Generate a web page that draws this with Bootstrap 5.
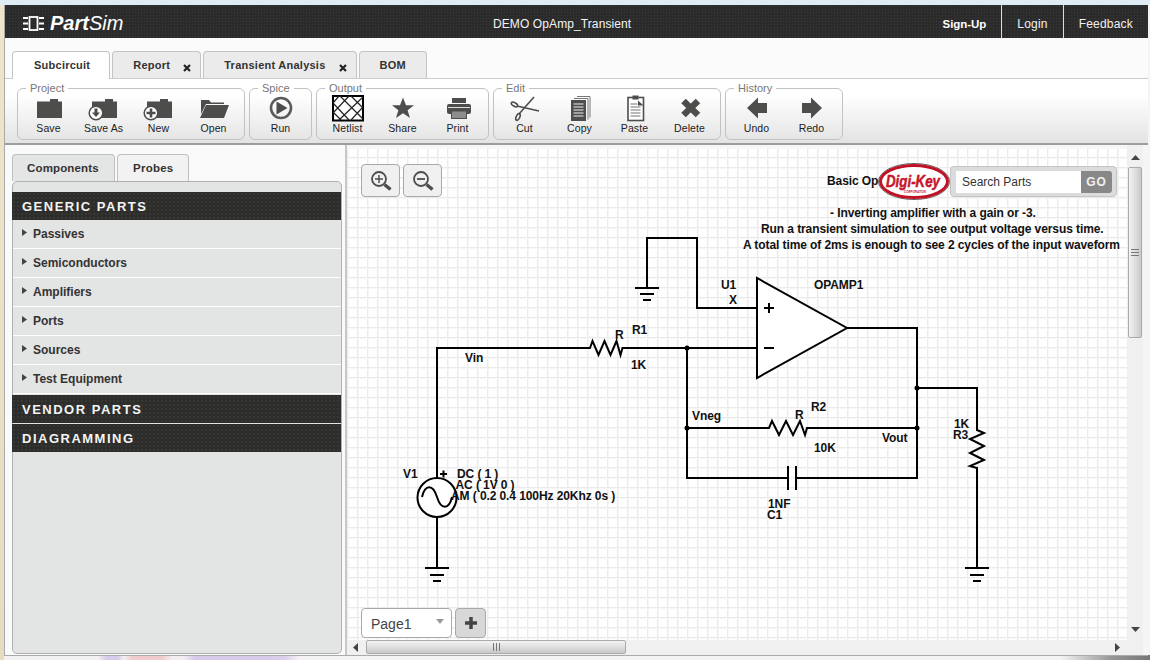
<!DOCTYPE html>
<html lang="en">
<head>
<meta charset="utf-8">
<title>PartSim</title>
<link href="https://cdn.jsdelivr.net/npm/bootstrap@5.3.0/dist/css/bootstrap.min.css" rel="stylesheet">
<style>
html,body{height:660px;overflow:hidden}
body{font-family:"Liberation Sans",Arial,sans-serif;font-size:12px;color:#333;
 background:
  linear-gradient(#dfecf3,#dfecf3) 0 0/100% 5px no-repeat,
  linear-gradient(#efe5cc,#e6dcc0) 0 0/4px 100% no-repeat,
  linear-gradient(90deg,#f2f2f2 98px,#d9cdec 106px,#d9cdec 118px,#f4f0f2 124px,#f0cccc 132px,#f0cccc 162px,#f2eef2 172px,#f2eef2 184px,#d8cbea 194px,#d8cbea 262px,#dccfec 285px,#f4f4f4 300px,#f4f4f4 1060px,#999 1110px,#777 1150px) 0 100%/100% 5px no-repeat,
  #f4f4f4}
.shell{position:relative;margin:5px 0 0 4px;width:1144px;height:651px;border-left:1px solid #aaa;border-bottom:1px solid #aaa;background:#fbfbfb}
.topbar{height:33px;color:#fff;background-color:#2b2b2b;background-image:radial-gradient(#3b3b3b 1px,transparent 1px);background-size:3px 3px}
.brand{width:488px;padding:3px 0 0 18px}
.brand-name{font-size:20px;font-style:italic;margin-left:6px;line-height:30px}
.doc-title{line-height:38px;font-size:12px;letter-spacing:.1px;color:#f4f4f4}
.top-link{display:block;color:#f0f0f0;text-decoration:none;padding:0 15px;line-height:38px;letter-spacing:.2px;border-left:1px solid #ddd}
.top-link.plain{border-left:0;font-weight:700;font-size:11.5px;color:#fff;letter-spacing:-.05px}
.tabstrip{height:41px;padding:13px 0 0 7px;border-bottom:1px solid #ccc;background:#fbfbfb}
.tabstrip .nav-link,.sidetabs .nav-link{display:flex;height:27px;font-weight:700;color:#333;font-size:11px;letter-spacing:.25px;line-height:27px;padding:0 20px;border:1px solid #c4c4c4;border-bottom:0;border-radius:4px 4px 0 0;background:#ebebeb;margin:0}
.tabstrip .nav-link.active{background:#fff;position:relative;height:28px;padding:0 19px 0 21px}
.tabstrip .nav-link.closable{padding-right:9px}
.tabstrip .nav-item+.nav-item,.sidetabs .nav-item+.nav-item{margin-left:2px}
.tabstrip .nav{border:0;gap:0}
.tab-x{width:8px;height:8px;margin:12px 0 0 13px}
.ribbon{height:66px;padding:3px 0 0 12px;gap:4px;border-bottom:2px solid #9d9d9d;background:linear-gradient(#fff 25%,#e3e3e3 100%)}
.toolset{border:1px solid #c2c2c2;border-radius:6px;padding:0 3px 5px;margin:0;height:58px;min-width:0}
.toolset legend{float:none;width:auto;margin:0 0 0 5px;padding:0 4px;font-size:11px;line-height:12px;color:#777}
.toolset legend+*{clear:none}
.tool{width:55px;background:none;border:0;padding:0;color:#222;font-size:10.5px;letter-spacing:.1px;line-height:12px}
.tool svg{display:block;margin:0 auto}
.tool-ico{fill:#4d4d4c}
.work{height:510px}
.sidebar{width:342px;padding:9px 3px 0 7px;border-right:2px solid #c8c8c8;background:#fafafa}
.sidetabs{border:0}
.sidetabs .nav-link{background:#f2f2f2;font-size:11.5px;letter-spacing:.25px;padding:0 14px 0 15px;border-color:#c0c0c0}
.sidetabs .nav-link.active{background:#e4e5e5;color:#333;padding:0 14px;width:103px;letter-spacing:.15px;border-color:#c0c0c0}
.sidetabs .nav-item+.nav-item{margin-left:2px}
.partbox{height:473px;margin-top:0;padding-top:10px;background:#e3e4e4;border:1px solid #b0b0b0;border-radius:5px}
.cat{height:28px;line-height:29px;padding-left:10px;margin:0 0 0 -1px;color:#f4f4f4;font-size:13px;font-weight:700;letter-spacing:1.5px;background-color:#2e2d2e;background-image:radial-gradient(#38382f .8px,transparent .8px);background-size:4px 4px}
.cat-gap{margin-top:1px}
.cat-thin{margin-top:1px}
.part-list{border-radius:0;background:transparent}
.part-list .list-group-item{height:29px;line-height:27px;padding:0 0 0 9px;background:transparent;border:0;border-bottom:1px solid #fff;color:#333;font-weight:700;font-size:12px;display:flex;align-items:center}
.tri{width:5px;height:7px;margin-right:6px;margin-top:-3px;fill:#444}
.canvaszone{width:801px;background:#f6f6f6}
.sheet{position:relative;width:780px;height:495px;overflow:hidden;background-color:#fff;background-image:linear-gradient(#ebebeb 1px,#f7f7f7 1px,#f7f7f7 2px,transparent 2px),linear-gradient(90deg,#ebebeb 1px,#f7f7f7 1px,#f7f7f7 2px,transparent 2px);background-size:10px 10px;background-position:0 9px;border-top:3px solid #f6f6f6}
.circuit{position:absolute;left:0;top:0;width:780px;height:492px}
.circuit text{font-family:"Liberation Sans",Arial,sans-serif;font-size:12px;font-weight:700;letter-spacing:-.09px;fill:#111}
.wire{fill:none;stroke:#000;stroke-width:2}
.zoomers{position:absolute;left:14px;top:16px;gap:3px}
.zoomers .btn,.plus-btn{width:39px;height:33px;padding:0;border:1px solid #a9a9a9;border-radius:4px;background:#f0f0f0;display:flex;align-items:center;justify-content:center}
.searcher{position:absolute;left:603px;top:18px;width:167px;height:31px;padding:4px 4px 4px 5px;background:#dcdcdc;border:1px solid #c4c4c4;border-radius:4px}
.searcher .form-control{height:22px;border:0;border-radius:0;padding:0 6px;font-size:12px;color:#333;background:#fff;box-shadow:none}
.searcher .form-control::placeholder{color:#333;opacity:1}
.searcher .btn{width:31px;height:22px;padding:0;border:0;border-radius:0 3px 3px 0;background:#888;color:#f0f0f0;font-size:12px;font-weight:700;letter-spacing:1px;line-height:22px}
.dk-logo{position:absolute;left:530px;top:15px;width:74px;height:38px}
.dk-logo text{font-family:"Liberation Sans",Arial,sans-serif;font-style:italic;font-weight:700;fill:#c8152a}
.pagebar{position:absolute;left:14px;top:460px;gap:3px}
.page-pick{width:91px;height:30px;padding:1px 7px 0 9px;background:#fff;border:1px solid #aaa;border-radius:4px;font-size:14px;color:#444;line-height:30px}
.caret-ico{margin:-4px 0 0 0}
.plus-btn{width:31px;height:30px;background:#d8d8d8}
.vbar{width:16px;height:495px;padding:10px 0 8px;background:#f0f0f0}
.bar-arrow{fill:#444}
.vthumb{width:14px;height:171px;margin-top:7px;border:1px solid #aaa;border-radius:2px;background:linear-gradient(90deg,#f4f4f4,#c9c9c9)}
.hbar{width:796px;height:15px;padding:0 23px 0 6px;background:#f0f0f0}
.hthumb{width:260px;height:14px;margin:0 0 1px 8px;border:1px solid #aaa;border-radius:2px;background:linear-gradient(#f4f4f4,#c9c9c9)}
</style>
</head>
<body>
<div class="shell d-flex flex-column">

<header class="topbar d-flex align-items-stretch">
  <div class="brand d-flex align-items-center">
    <svg width="21" height="15" viewBox="0 0 21 15" fill="none" stroke="#fff"><rect x="6.500" y="1" width="8" height="13" stroke-width="1.800"/><path d="M0 2h5M0 7.500h5M0 13h5M16 2h5M16 7.500h5M16 13h5" stroke-width="2"/></svg>
    <span class="brand-name"><b>Part</b>Sim</span>
  </div>
  <div class="doc-title">DEMO OpAmp_Transient</div>
  <nav class="ms-auto d-flex">
    <a class="top-link plain" href="#">Sign-Up</a>
    <a class="top-link" href="#">Login</a>
    <a class="top-link" href="#">Feedback</a>
  </nav>
</header>

<div class="tabstrip">
  <ul class="nav">
    <li class="nav-item"><a class="nav-link active" href="#">Subcircuit</a></li>
    <li class="nav-item"><a class="nav-link closable" href="#">Report<svg class="tab-x" viewBox="0 0 8 8"><path d="M1 1l6 6M7 1l-6 6" stroke="#222" stroke-width="2.2"/></svg></a></li>
    <li class="nav-item"><a class="nav-link closable" href="#">Transient Analysis<svg class="tab-x" viewBox="0 0 8 8"><path d="M1 1l6 6M7 1l-6 6" stroke="#222" stroke-width="2.2"/></svg></a></li>
    <li class="nav-item"><a class="nav-link" href="#">BOM</a></li>
  </ul>
</div>

<div class="ribbon d-flex">
  <fieldset class="toolset">
    <legend>Project</legend>
    <div class="d-flex">
      <button class="tool"><svg class="tool-ico" width="40" height="28"><path d="M21 5h8v2.500h4V24H8V7.500h13z"/></svg>Save</button>
      <button class="tool"><svg class="tool-ico" width="40" height="28"><path d="M21 5h8v2.500h4V24H8V7.500h13z"/><circle cx="12" cy="19" r="6.800" fill="#fff" stroke="#4d4d4c" stroke-width="1.500"/><path d="M10.500 14.500h3v4h2.500L12 23l-4-4.500h2.500z"/></svg>Save As</button>
      <button class="tool"><svg class="tool-ico" width="40" height="28"><path d="M21 5h8v2.500h4V24H8V7.500h13z"/><circle cx="12" cy="19" r="6.800" fill="#fff" stroke="#4d4d4c" stroke-width="1.500"/><path d="M10.700 14.500h2.600v3.200h3.200v2.600h-3.200v3.200h-2.600v-3.200H7.500v-2.600h3.200z"/></svg>New</button>
      <button class="tool"><svg class="tool-ico" width="40" height="28"><path d="M7 20V6h8l2 2.500h13V10H12z"/><path d="M6 24l6-13h23l-5 13z"/></svg>Open</button>
    </div>
  </fieldset>
  <fieldset class="toolset">
    <legend>Spice</legend>
    <div class="d-flex">
      <button class="tool"><svg class="tool-ico" width="40" height="28"><circle cx="20" cy="14" r="10" fill="none" stroke="#5a5a59" stroke-width="2.600"/><path d="M15.500 7.500L26.500 14l-11 6.500z"/></svg>Run</button>
    </div>
  </fieldset>
  <fieldset class="toolset">
    <legend>Output</legend>
    <div class="d-flex">
      <button class="tool"><svg width="40" height="28"><rect x="5" y="2" width="30" height="24.500" fill="#fff" stroke="#000" stroke-width="2"/><path d="M5 9L21 26M5 18L13 26M12 2L35 25M23 2L35 14M5 19L21 2M5 9L11 2M11 26L35 3M23 26L35 13" fill="none" stroke="#222" stroke-width="1.200"/></svg>Netlist</button>
      <button class="tool"><svg class="tool-ico" width="40" height="28"><path d="M20 3.500l3 7.700h8l-6.400 5 2.400 7.800-7-4.700-7 4.700 2.400-7.800-6.400-5h8z"/></svg>Share</button>
      <button class="tool"><svg class="tool-ico" width="40" height="28"><rect x="14" y="4" width="14" height="5"/><rect x="9" y="10" width="24" height="10" rx="2"/><rect x="13.500" y="17" width="15" height="7.500" fill="#8c8c8c" stroke="#4d4d4c"/><path d="M10 13.500h22" stroke="#ddd" stroke-width="1"/></svg>Print</button>
    </div>
  </fieldset>
  <fieldset class="toolset">
    <legend>Edit</legend>
    <div class="d-flex">
      <button class="tool"><svg width="40" height="28" fill="none" stroke="#4d4d4c" stroke-width="1.600"><path d="M12 12L34 17M14 20L29 3"/><ellipse cx="9.500" cy="10.500" rx="3.500" ry="1.800" transform="rotate(30 9.500 10.500)"/><ellipse cx="13" cy="23" rx="1.800" ry="3.500" transform="rotate(25 13 23)"/></svg>Cut</button>
      <button class="tool"><svg width="40" height="28"><path d="M17 2.500h13v21" fill="none" stroke="#777"/><path d="M14 4.500h14v21" fill="none" stroke="#777"/><rect x="11" y="6" width="15" height="21" fill="#4d4d4c"/><path d="M13.500 10h10M13.500 13h10M13.500 16h10M13.500 19h10M13.500 22h10" stroke="#bbb" stroke-width="1.500"/></svg>Copy</button>
      <button class="tool"><svg width="40" height="28"><rect x="13" y="3.500" width="15.500" height="23" fill="#fff" stroke="#4d4d4c" stroke-width="1.600"/><rect x="17.500" y="1.500" width="6" height="4" fill="#4d4d4c"/><path d="M15.500 10h7M15.500 13h10M15.500 16h10M15.500 19h10M15.500 22h10" stroke="#777" stroke-width="1.100"/><path d="M23 6.500l5.500 5H23z" fill="#4d4d4c"/></svg>Paste</button>
      <button class="tool"><svg width="40" height="28"><path d="M13.500 7l14.500 14M28 7L13.500 21" stroke="#4d4d4c" stroke-width="6.500"/></svg>Delete</button>
    </div>
  </fieldset>
  <fieldset class="toolset">
    <legend>History</legend>
    <div class="d-flex">
      <button class="tool"><svg class="tool-ico" width="40" height="28"><path d="M10 14L21 3.500V9h9v10h-9v5.500z"/></svg>Undo</button>
      <button class="tool"><svg class="tool-ico" width="40" height="28"><path d="M30 14L19 3.500V9h-9v10h9v5.500z"/></svg>Redo</button>
    </div>
  </fieldset>
</div>

<div class="work d-flex">
  <aside class="sidebar">
    <ul class="nav sidetabs">
      <li class="nav-item"><a class="nav-link active" href="#">Components</a></li>
      <li class="nav-item"><a class="nav-link" href="#">Probes</a></li>
    </ul>
    <div class="partbox">
      <div class="cat">GENERIC PARTS</div>
      <ul class="list-group part-list">
        <li class="list-group-item"><svg class="tri" viewBox="0 0 5 7"><path d="M0 0l5 3.500L0 7z"/></svg>Passives</li>
        <li class="list-group-item"><svg class="tri" viewBox="0 0 5 7"><path d="M0 0l5 3.500L0 7z"/></svg>Semiconductors</li>
        <li class="list-group-item"><svg class="tri" viewBox="0 0 5 7"><path d="M0 0l5 3.500L0 7z"/></svg>Amplifiers</li>
        <li class="list-group-item"><svg class="tri" viewBox="0 0 5 7"><path d="M0 0l5 3.500L0 7z"/></svg>Ports</li>
        <li class="list-group-item"><svg class="tri" viewBox="0 0 5 7"><path d="M0 0l5 3.500L0 7z"/></svg>Sources</li>
        <li class="list-group-item"><svg class="tri" viewBox="0 0 5 7"><path d="M0 0l5 3.500L0 7z"/></svg>Test Equipment</li>
      </ul>
      <div class="cat cat-gap">VENDOR PARTS</div>
      <div class="cat cat-thin">DIAGRAMMING</div>
    </div>
  </aside>

  <main class="canvaszone">
    <div class="d-flex">
      <div class="sheet">
        <svg class="circuit" viewBox="347 148 780 492">
          <path class="wire" d="M647 288V238H697V308H757"/>
          <path class="wire" d="M635 288H659M640 294H654M643 300H651"/>
          <path class="wire" d="M437 478V348H590l2.500-7 6 14 6-14 6 14 6-14 4 14 2-7H757"/>
          <path class="wire" d="M687 348V478H788M796 478H917V328H847"/>
          <path class="wire" d="M788 466V490M796 466V490"/>
          <path class="wire" d="M687 428H769l3-7 7 14 7-14 7 14 7-14 5 14 2-7H917"/>
          <path class="wire" d="M917 388H977V430l7 3-14 6 14 7-14 7 14 7-14 6 7 2V568"/>
          <path class="wire" d="M965 568H989M970 575H984M973 581H981"/>
          <path class="wire" d="M437 517V568M425 568H449M430 575H444M433 581H441"/>
          <path d="M757 278V378L847 328Z" fill="#fff" stroke="#000" stroke-width="2"/>
          <path class="wire" d="M764 308H774M769 303V313M764 348H774"/>
          <circle cx="687" cy="348" r="2.500"/><circle cx="687" cy="428" r="2.500"/><circle cx="917" cy="388" r="2.500"/><circle cx="917" cy="428" r="2.500"/>
          <circle cx="437" cy="497.500" r="19.500" fill="#fff" stroke="#000" stroke-width="2"/>
          <path class="wire" d="M422 497c3-13 11-13 15 0s12 13 15 0"/>
          <path class="wire" d="M440 474H447M443.500 470.500V477.500"/>
          <text x="827" y="185">Basic Op</text>
          <text x="830" y="217">- Inverting amplifier with a gain or -3.</text>
          <text x="761" y="233">Run a transient simulation to see output voltage versus time.</text>
          <text x="743" y="249">A total time of 2ms is enough to see 2 cycles of the input waveform</text>
          <text x="721" y="289">U1</text><text x="729" y="304">X</text><text x="814" y="289">OPAMP1</text>
          <text x="615" y="339">R</text><text x="632" y="334">R1</text><text x="631" y="369">1K</text>
          <text x="465" y="362">Vin</text><text x="692" y="420">Vneg</text>
          <text x="795" y="419">R</text><text x="811" y="411">R2</text><text x="814" y="452">10K</text><text x="882" y="442">Vout</text>
          <text x="954" y="428">1K</text><text x="953" y="439">R3</text>
          <text x="768" y="508">1NF</text><text x="767" y="519">C1</text>
          <text x="403" y="478">V1</text><text x="457" y="478">DC ( 1 )</text><text x="455.500" y="489">AC ( 1V 0 )</text><text x="451" y="500">AM ( 0.2 0.4 100Hz 20Khz 0s )</text>
        </svg>
        <div class="zoomers d-flex">
          <button class="btn" aria-label="Zoom in"><svg width="24" height="24" viewBox="0 0 24 24" fill="none" stroke="#4d4d4c"><circle cx="10" cy="10" r="7" stroke-width="1.800"/><path d="M10 6v8M6 10h8" stroke-width="1.500"/><path d="M15.500 15.500l6 5" stroke-width="3.500"/></svg></button>
          <button class="btn" aria-label="Zoom out"><svg width="24" height="24" viewBox="0 0 24 24" fill="none" stroke="#4d4d4c"><circle cx="10" cy="10" r="7" stroke-width="1.800"/><path d="M6 10h8" stroke-width="1.800"/><path d="M15.500 15.500l6 5" stroke-width="3.500"/></svg></button>
        </div>
        <div class="searcher d-flex">
          <input class="form-control" placeholder="Search Parts" aria-label="Search Parts">
          <button class="btn flex-shrink-0">GO</button>
        </div>
        <svg class="dk-logo" viewBox="0 0 74 38">
          <ellipse cx="37" cy="18.500" rx="35.500" ry="18" fill="#fff" stroke="#666" stroke-width="1"/>
          <ellipse cx="37" cy="18.500" rx="33.500" ry="16" fill="#fff" stroke="#c01226" stroke-width="3"/>
          <text x="9" y="24" font-size="17" stroke="#c8152a" stroke-width=".5" textLength="54" lengthAdjust="spacingAndGlyphs">Digi-Key</text>
          <text x="27" y="29.500" font-size="4" textLength="22" lengthAdjust="spacingAndGlyphs">CORPORATION</text>
        </svg>
        <div class="pagebar d-flex">
          <div class="page-pick d-flex justify-content-between align-items-center"><span>Page1</span><svg class="caret-ico" width="8" height="5" viewBox="0 0 8 5"><path d="M0 0h8L4 5z" fill="#999"/></svg></div>
          <button class="plus-btn" aria-label="Add page"><svg width="14" height="14" viewBox="0 0 14 14"><path d="M7 1v12M1 7h12" stroke="#444" stroke-width="3.500"/></svg></button>
        </div>
      </div>
      <div class="vbar d-flex flex-column align-items-center">
        <svg class="bar-arrow" width="9" height="5" viewBox="0 0 9 5"><path d="M4.500 0L9 5H0z"/></svg>
        <div class="vthumb d-flex align-items-center justify-content-center"><svg width="8" height="7" viewBox="0 0 8 7"><path d="M0 .5h8M0 3.500h8M0 6.500h8" stroke="#777"/></svg></div>
        <svg class="bar-arrow mt-auto" width="9" height="5" viewBox="0 0 9 5"><path d="M0 0h9L4.500 5z"/></svg>
      </div>
    </div>
    <div class="hbar d-flex align-items-center">
      <svg class="bar-arrow" width="5" height="9" viewBox="0 0 5 9"><path d="M5 0v9L0 4.500z"/></svg>
      <div class="hthumb d-flex align-items-center justify-content-center"><svg width="7" height="8" viewBox="0 0 7 8"><path d="M.5 0v8M3.500 0v8M6.500 0v8" stroke="#777"/></svg></div>
      <svg class="bar-arrow ms-auto" width="5" height="9" viewBox="0 0 5 9"><path d="M0 0v9l5-4.500z"/></svg>
    </div>
  </main>
</div>
</div>
<script src="https://cdn.jsdelivr.net/npm/bootstrap@5.3.0/dist/js/bootstrap.bundle.min.js"></script>
</body>
</html>
